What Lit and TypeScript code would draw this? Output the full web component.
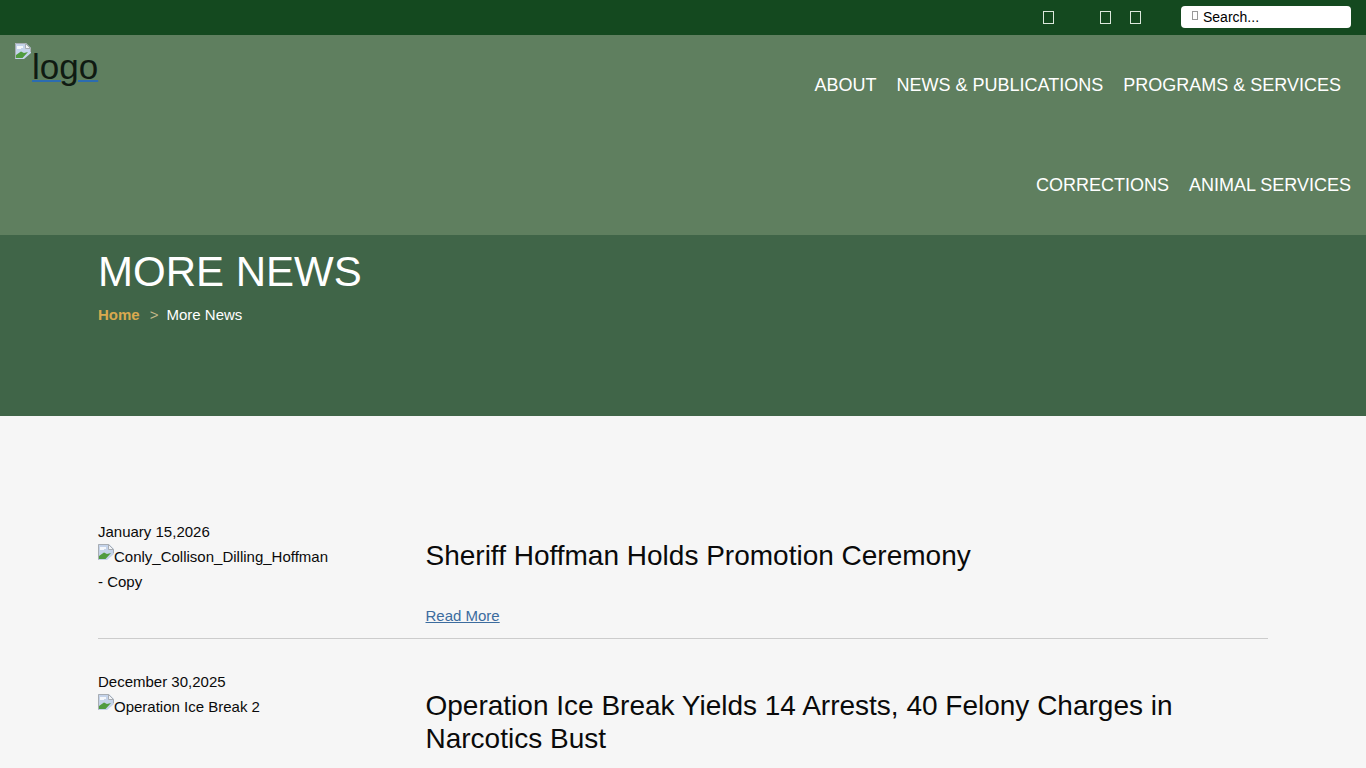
import { LitElement, html, css } from 'lit';
import { customElement } from 'lit/decorators.js';

const brokenImage = html`<svg class="broken" viewBox="0 0 16 16" width="16" height="16" aria-hidden="true"><path d="M0 0H11L16 5V10L9 16H0Z" fill="#c4d3ea" /><path d="M.5 15.5V.5H10.5L15.5 5.5V9" fill="none" stroke="#a8adb3" /><path d="M10.5 .5V5.5H15.5Z" fill="#f2f4f7" stroke="#a8adb3" /><path d="M2 3H8V5H6V6H2Z" fill="#f4f7fb" /><path d="M1 15V12L6 8.5L9 10L13 9L7.5 15Z" fill="#4f9b3f" /></svg>`;

const posts = [
  { date: 'January 15,2026', alt: 'Conly_Collison_Dilling_Hoffman - Copy', title: 'Sheriff Hoffman Holds Promotion Ceremony' },
  { date: 'December 30,2025', alt: 'Operation Ice Break 2', title: 'Operation Ice Break Yields 14 Arrests, 40 Felony Charges in Narcotics Bust' },
];

@customElement('app-root')
export class AppRoot extends LitElement {
  static styles = css`
    :host {
      display: block;
      height: 768px;
      overflow: hidden;
      background: #f6f6f6;
      font-family: "Liberation Sans", Arial, sans-serif;
      color: #0a0a0a;
    }

    .topbar {
      height: 35px;
      box-sizing: border-box;
      background: #14491f;
      display: flex;
      justify-content: flex-end;
      padding: 6px 15px 0 0;
    }

    .tofu {
      display: block;
      width: 11px;
      height: 13px;
      border: 1px solid #dce8dc;
      box-sizing: border-box;
    }

    .social {
      display: flex;
      margin: 5px 40px 0 0;
    }

    .social .tofu:nth-child(1) { margin-right: 46px; }
    .social .tofu:nth-child(2) { margin-right: 19px; }

    .search {
      width: 170px;
      height: 22px;
      box-sizing: border-box;
      background: #fff;
      border-radius: 4px;
      display: flex;
      align-items: center;
      gap: 5px;
      padding: 0 0 1px 11px;
      font-size: 14px;
      color: #000;
    }

    .search .tofu {
      width: 6px;
      height: 9px;
      border-color: #999;
      margin-top: -3px;
    }

    .header {
      height: 200px;
      background: #5f7f5f;
      display: flex;
      justify-content: space-between;
      padding: 0 15px;
    }

    .logo {
      display: block;
      margin-top: 8px;
      height: 40px;
      font-size: 35px;
      line-height: 47px;
      color: #0f1a12;
      text-decoration: underline;
      text-decoration-color: #2b6cb0;
      text-decoration-thickness: 2px;
      white-space: nowrap;
    }

    .logo .broken {
      vertical-align: top;
      margin-right: 1px;
    }

    .nav {
      width: 600px;
      display: flex;
      flex-wrap: wrap;
      justify-content: flex-end;
      align-content: flex-start;
    }

    .nav a {
      height: 100px;
      line-height: 100px;
      padding-left: 20px;
      color: #fff;
      font-size: 18px;
      white-space: nowrap;
    }

    .nav a.row-end { margin-right: 10px; }

    .hero {
      height: 181px;
      box-sizing: border-box;
      background: #406548;
      padding: 13px 98px 0;
      color: #fff;
    }

    .hero h1 {
      margin: 0;
      font-size: 42px;
      font-weight: 400;
      line-height: 48px;
    }

    .crumbs {
      margin-top: 9px;
      font-size: 15px;
      line-height: 20px;
      display: flex;
    }

    .crumbs b { color: #d9a94f; }
    .crumbs i { font-style: normal; color: #c3b98a; margin: 0 8px 0 10px; }

    .list {
      padding: 105px 98px 0;
    }

    .post {
      display: grid;
      grid-template-columns: 327.5px 1fr;
      border-bottom: 1px solid #ccc;
      height: 118px;
      box-sizing: border-box;
      margin-bottom: 32px;
    }

    .date {
      font-size: 15px;
      line-height: 22px;
    }

    .thumb {
      width: 232px;
      margin-top: 1px;
      font-size: 15px;
      line-height: 25px;
    }

    .thumb .broken {
      vertical-align: 2px;
    }

    .post h2 {
      margin: 0;
      font-size: 28px;
      font-weight: 400;
      line-height: 33px;
      padding-top: 18px;
      width: 780px;
    }

    .more {
      display: block;
      margin-top: 35px;
      font-size: 15px;
      color: #3c6c9e;
      text-decoration: underline;
    }
  `;

  render() {
    return html`
      <div class="topbar">
        <div class="social">
          <span class="tofu"></span><span class="tofu"></span><span class="tofu"></span>
        </div>
        <div class="search"><span class="tofu"></span>Search...</div>
      </div>
      <div class="header">
        <a class="logo">${brokenImage}logo</a>
        <nav class="nav">
          <a>ABOUT</a><a>NEWS &amp; PUBLICATIONS</a><a class="row-end">PROGRAMS &amp; SERVICES</a>
          <a>CORRECTIONS</a><a>ANIMAL SERVICES</a>
        </nav>
      </div>
      <div class="hero">
        <h1>MORE NEWS</h1>
        <div class="crumbs"><b>Home</b><i>&gt;</i><span>More News</span></div>
      </div>
      <div class="list">
        ${posts.map(
          (p) => html`
            <div class="post">
              <div>
                <div class="date">${p.date}</div>
                <div class="thumb">${brokenImage}${p.alt}</div>
              </div>
              <div>
                <h2>${p.title}</h2>
                <a class="more">Read More</a>
              </div>
            </div>
          `
        )}
      </div>
    `;
  }
}
